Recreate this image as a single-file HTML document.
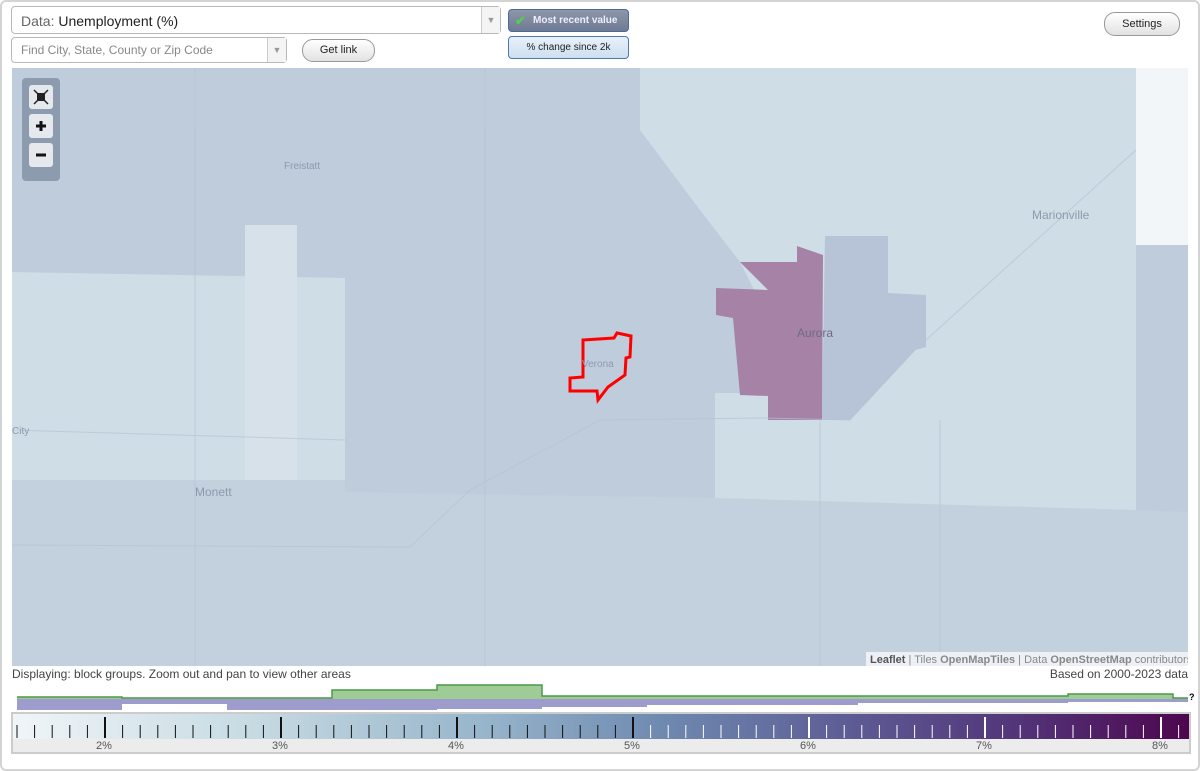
<!DOCTYPE html>
<html><head><meta charset="utf-8"><style>
body{margin:0;width:1200px;height:771px;overflow:hidden;background:#fff;font-family:"Liberation Sans",sans-serif;position:relative}
.frame{position:absolute;left:0;top:0;width:1196px;height:767px;border:2px solid #d4d4d4;border-radius:6px}
.sel{position:absolute;background:#fff;border:1px solid #b8b8b8;border-radius:4px;box-sizing:border-box}
.arr{position:absolute;right:0;top:0;bottom:0;width:18px;border-left:1px solid #ccc;background:#f4f4f4;color:#999;font-size:9px;text-align:center}
.btn{position:absolute;border:1px solid #999;border-radius:11px;background:linear-gradient(#fff,#e2e2e2);font-size:11px;color:#222;text-align:center;box-sizing:border-box}
</style></head><body>
<div class="frame"></div>
<div class="sel" style="left:11px;top:6px;width:490px;height:28px"><span style="position:absolute;left:9px;top:6px;font-size:14px;color:#666">Data: <span style="color:#222">Unemployment (%)</span></span><div class="arr" style="line-height:26px">▼</div></div>
<div class="sel" style="left:11px;top:37px;width:276px;height:26px"><span style="position:absolute;left:9px;top:5px;font-size:12px;color:#888">Find City, State, County or Zip Code</span><div class="arr" style="line-height:24px">▼</div></div>
<div class="btn" style="left:302px;top:39px;width:73px;height:23px;line-height:21px">Get link</div>
<div style="position:absolute;left:508px;top:9px;width:121px;height:23px;border:1px solid #4a6a9a;border-radius:4px;background:linear-gradient(#8d96aa,#6f7b92);box-sizing:border-box;color:#eef;font-size:10px;font-weight:bold;line-height:21px;padding-left:24px"><span style="position:absolute;left:6px;top:0;color:#5c5;font-size:13px">✔</span>Most recent value</div>
<div style="position:absolute;left:508px;top:36px;width:121px;height:23px;border:1px solid #4a7ab0;border-radius:4px;background:linear-gradient(#e8f1fa,#cddff0);box-sizing:border-box;color:#222;font-size:10px;line-height:21px;text-align:center">% change since 2k</div>
<div class="btn" style="left:1104px;top:12px;width:76px;height:24px;line-height:22px">Settings</div>

<svg style="position:absolute;left:12px;top:68px" width="1176" height="598" viewBox="12 68 1176 598">
<rect x="12" y="68" width="1176" height="598" fill="#bfccdc"/>
<polygon points="640,68 1136,68 1136,510 820,505 820,420 740,262 700,210 640,130" fill="#cfdde7"/>
<rect x="1136" y="68" width="52" height="177" fill="#f3f6f8"/>
<polygon points="12,272 345,278 345,480 12,480" fill="#cfdde7"/>
<rect x="245" y="225" width="52" height="255" fill="#d6e1e9"/>
<polygon points="715,393 768,393 768,420 850,420 850,505 715,500" fill="#cfdde7"/>
<polygon points="12,480 345,480 345,492 715,498 1136,510 1188,512 1188,666 12,666" fill="#c3d0de"/>
<polygon points="825,236 888,236 888,293 926,295 926,347 915,350 850,420 822,420" fill="#b7c3d6"/>
<polygon points="740,262 797,262 797,246 823,255 822,420 768,420 768,396 740,395 733,318 716,315 716,288 768,290" fill="#a682a6"/>
<g stroke="#b6c3d2" fill="none" stroke-width="1" opacity="0.7">
<path d="M12,545 L410,547 L470,490 L600,420 L760,418 L850,420 L915,350 L1136,150"/>
<path d="M195,68 V665 M485,68 V666 M820,420 V666 M940,420 V666"/>
<path d="M12,430 L345,440"/>
</g>
<polygon points="583,340 614,338 617,333 631,336 630,357 626,358 625,375 608,387 598,400 597,391 570,391 570,378 583,377" fill="none" stroke="#f00" stroke-width="3"/>
<g font-size="12" fill="#8c9aac">
<text x="1032" y="219">Marionville</text><text x="195" y="496">Monett</text>
<text x="797" y="337" fill="#6d6a88">Aurora</text><text x="582" y="367" font-size="10">Verona</text>
<text x="284" y="169" font-size="10">Freistatt</text><text x="12" y="434" font-size="10">City</text>
</g>
<rect x="866" y="652" width="322" height="14" fill="rgba(255,255,255,0.7)"/>
<text x="870" y="663" font-size="11" fill="#888"><tspan font-weight="bold" fill="#555">Leaflet</tspan> | Tiles <tspan font-weight="bold">OpenMapTiles</tspan> | Data <tspan font-weight="bold">OpenStreetMap</tspan> contributors</text>
<rect x="22" y="78" width="38" height="103" rx="4" fill="#8c9bad"/>
<rect x="29" y="85" width="24" height="24" rx="3" fill="#e5e8ec"/><rect x="37" y="93" width="8" height="8" fill="#222"/>
<path d="M34,90l4,4M48,90l-4,4M34,104l4,-4M48,104l-4,-4" stroke="#222" stroke-width="1.5"/>
<rect x="29" y="114" width="24" height="24" rx="3" fill="#e5e8ec"/><path d="M36,126H46M41,121V131" stroke="#111" stroke-width="3"/>
<rect x="29" y="143" width="24" height="24" rx="3" fill="#e5e8ec"/><path d="M36,155H46" stroke="#111" stroke-width="3"/>
</svg>
<div style="position:absolute;left:12px;top:667px;font-size:12px;color:#444">Displaying: block groups. Zoom out and pan to view other areas</div>
<div style="position:absolute;right:12px;top:667px;font-size:12px;color:#444">Based on 2000-2023 data</div>
<svg style="position:absolute;left:0;top:680px" width="1200" height="32">
<path d="M17,19 V17 H122 V18 H332 V10 H437 V5 H542 V16 H1068 V14 H1173 V18 H1188 V19Z" fill="#9fcb97"/>
<path d="M17,17 H122 V18 H332 V10 H437 V5 H542 V16 H1068 V14 H1173 V18 H1188" fill="none" stroke="#4c9a48" stroke-width="1.5"/>
<path d="M17,19 H1188 V22 H1068 V23 H858 V25 H647 V27 H542 V29 H437 V30 H227 V30 H227 V24 H122 V30 H17Z" fill="#9e9ccd"/>
<rect x="227" y="19" width="210" height="11" fill="#9e9ccd"/>
<text x="1189" y="20" font-size="9" font-weight="bold">?</text>
</svg>
<div style="position:absolute;left:11px;top:712px;width:1180px;height:42px;border:2px solid #ccc;box-sizing:border-box;background:#ececec"></div>
<div style="position:absolute;left:13px;top:714px;width:1176px;height:25px;background:linear-gradient(90deg,#f0f5f8,#c7dbe3 20%,#97b5cb 40%,#6f8ab0 55%,#5e5f96 70%,#53367a 85%,#4d064e)"></div>
<svg style="position:absolute;left:0;top:714px" width="1200" height="40" id="t"></svg>
<div style="position:absolute;top:740px;font-size:11px;color:#555;left:96px">2%</div>
<div style="position:absolute;top:740px;font-size:11px;color:#555;left:272px">3%</div>
<div style="position:absolute;top:740px;font-size:11px;color:#555;left:448px">4%</div>
<div style="position:absolute;top:740px;font-size:11px;color:#555;left:624px">5%</div>
<div style="position:absolute;top:740px;font-size:11px;color:#555;left:800px">6%</div>
<div style="position:absolute;top:740px;font-size:11px;color:#555;left:976px">7%</div>
<div style="position:absolute;top:740px;font-size:11px;color:#555;left:1152px">8%</div>
<script>
var s=document.getElementById('t'),h='';
for(var k=-5;k<=61;k++){var x=105+17.6*k;if(x<15||x>1188)continue;var maj=k%10==0;var c=x>640?'#fff':'#111';
h+='<line x1="'+x+'" x2="'+x+'" y1="'+(maj?3:11)+'" y2="24" stroke="'+c+'" stroke-width="'+(maj?2:1)+'"/>';}
s.innerHTML=h;
</script>
</body></html>
